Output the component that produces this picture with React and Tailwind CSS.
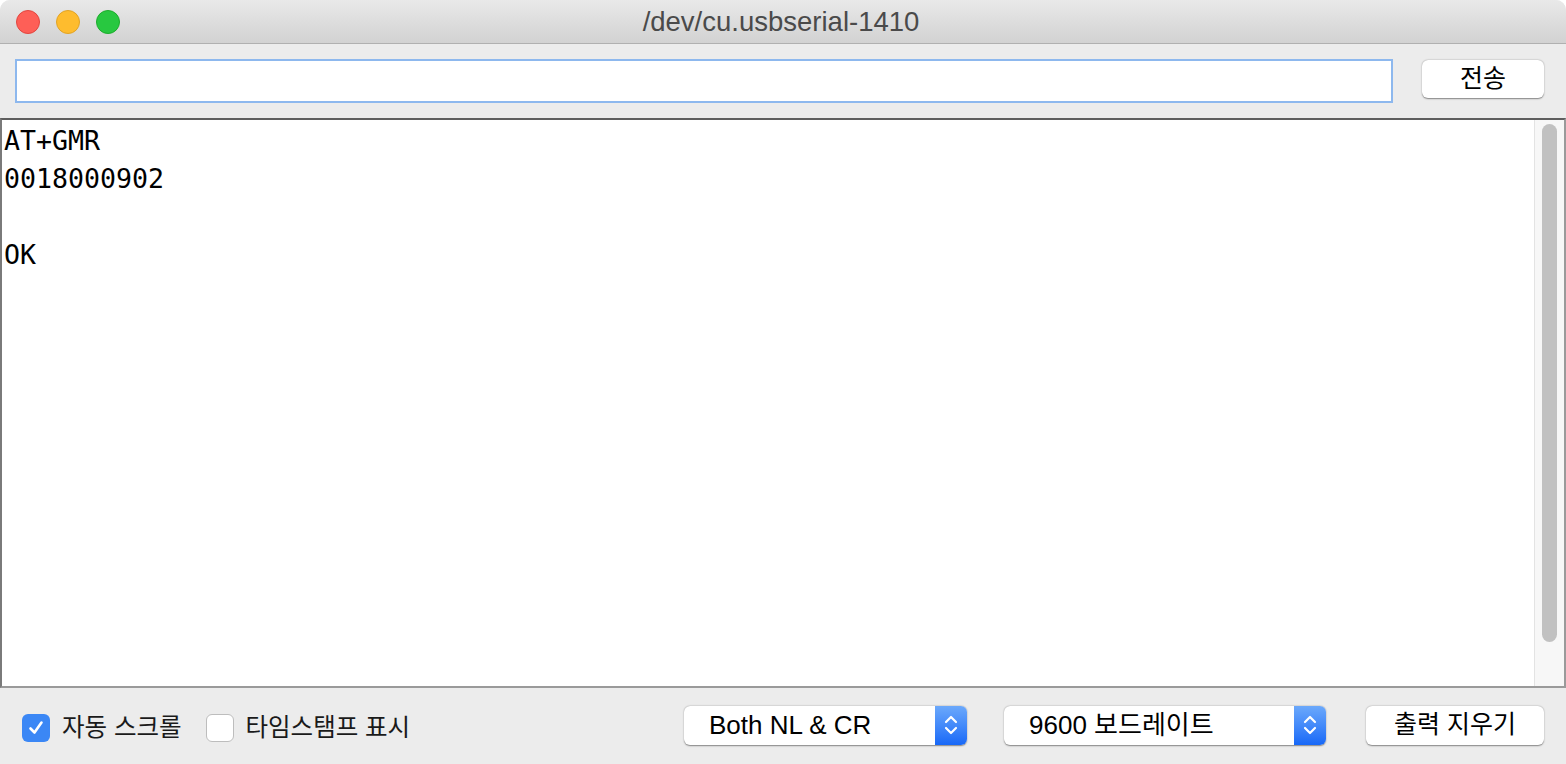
//
// SERIAL MONITOR
// ==============
// A mock of the Arduino serial monitor window on macOS.
//
import { useState } from "react";

const UI_FONT = { fontFamily: '"Liberation Sans", "Noto Sans CJK KR", sans-serif' };
const MONO_FONT = { fontFamily: '"DejaVu Sans Mono", "Liberation Mono", monospace' };

//
// Checkbox
// ========
function Checkbox({ checked, label }) {
    return (
        <label className="flex flex-row items-center gap-3 cursor-default">
            {checked ? (
                <span className="flex items-center justify-center w-[28px] h-[28px] rounded-[6px] bg-[#3b87f5]">
                    <svg width="18" height="18" viewBox="0 0 18 18">
                        <path d="M3.5 9.5 L7.5 13.5 L14.5 3.5" fill="none" stroke="white"
                              strokeWidth="2.6" strokeLinecap="round" strokeLinejoin="round" />
                    </svg>
                </span>
            ) : (
                <span className="w-[28px] h-[28px] rounded-[6px] bg-white border border-[#bdbdbd]"></span>
            )}
            <span className="text-[24.5px] text-[#1a1a1a]">{label}</span>
        </label>
    );
}

//
// Select
// ======
function Select({ value, width }) {
    return (
        <div className={"flex flex-row h-[39px] rounded-[6px] bg-white shadow-[0_0.5px_1.5px_rgba(0,0,0,0.45)] " + width}>
            <span className="flex-1 flex items-center pl-[25px] text-[26px] text-black">{value}</span>
            <span className="flex items-center justify-center w-[32px] rounded-r-[6px] bg-gradient-to-b from-[#6ba8fb] to-[#1768f7]">
                <svg width="16" height="26" viewBox="0 0 16 26">
                    <path d="M3 10 L8 5 L13 10 M3 16 L8 21 L13 16" fill="none" stroke="white"
                          strokeWidth="2.2" strokeLinecap="round" strokeLinejoin="round" />
                </svg>
            </span>
        </div>
    );
}

//
// App
// ===
export default function App() {
    const [message, setMessage] = useState("");
    const lines = ["AT+GMR", "0018000902", "", "OK"];

    return (
        <div className="w-[1566px] h-[764px] flex flex-col bg-white" style={UI_FONT}>
            <div className="flex flex-col flex-1 rounded-t-[10px] overflow-hidden bg-[#ececec]">

                {/* Title bar */}
                <div className="flex flex-row items-center h-[44px] px-[16px] gap-[16px]
                                bg-gradient-to-b from-[#e9e9e9] to-[#d2d2d2] border-b border-[#b0b0b0]">
                    <span className="w-[24px] h-[24px] rounded-full bg-[#fe5f57] border border-[#e2463f]"></span>
                    <span className="w-[24px] h-[24px] rounded-full bg-[#febc2e] border border-[#e1a325]"></span>
                    <span className="w-[24px] h-[24px] rounded-full bg-[#28c840] border border-[#1dac2c]"></span>
                    <span className="flex-1 text-center text-[27.5px] text-[#4a4a4a] pr-[124px]">
                        /dev/cu.usbserial-1410
                    </span>
                </div>

                {/* Send row */}
                <div className="flex flex-row items-center h-[74px] pl-[15px] pr-[22px] gap-[29px]">
                    <input className="w-[1378px] h-[44px] bg-white border-2 border-[#8db8ee] outline-none px-2 text-[24px]"
                           value={message}
                           onChange={(e) => setMessage(e.target.value)} />
                    <button className="w-[122px] h-[38px] rounded-[6px] bg-white text-[25px] text-black
                                       shadow-[0_0.5px_1.5px_rgba(0,0,0,0.45)] -mt-[4px]">
                        전송
                    </button>
                </div>

                {/* Output */}
                <div className="flex flex-row h-[570px] bg-white border-t-2 border-l-2 border-r-2 border-b-2
                                border-t-[#5e5e5e] border-l-[#7a7a7a] border-r-[#9a9a9a] border-b-[#9a9a9a]">
                    <div className="flex-1 pl-[2px] pt-[2px] text-[26.6px] leading-[38px] text-black" style={MONO_FONT}>
                        {lines.map((line, i) => (
                            <div key={i} className="h-[38px]">{line}</div>
                        ))}
                    </div>
                    <div className="w-[30px] bg-[#f7f7f7] border-l border-[#e3e3e3] pl-[7px] pt-[4px]">
                        <div className="w-[15px] h-[518px] rounded-full bg-[#c1c1c1]"></div>
                    </div>
                </div>

                {/* Bottom bar */}
                <div className="flex flex-row items-center flex-1 pl-[22px] pr-[22px] pb-[2px]">
                    <div className="flex flex-row items-center gap-[24px] mt-[6px]">
                        <Checkbox checked={true} label="자동 스크롤" />
                        <Checkbox checked={false} label="타임스탬프 표시" />
                    </div>
                    <div className="flex-1"></div>
                    <Select value="Both NL & CR" width="w-[283px]" />
                    <div className="w-[37px]"></div>
                    <Select value="9600 보드레이트" width="w-[322px]" />
                    <div className="w-[40px]"></div>
                    <button className="w-[178px] h-[39px] rounded-[6px] bg-white text-[25px] text-black
                                       shadow-[0_0.5px_1.5px_rgba(0,0,0,0.45)]">
                        출력 지우기
                    </button>
                </div>
            </div>
        </div>
    );
}
